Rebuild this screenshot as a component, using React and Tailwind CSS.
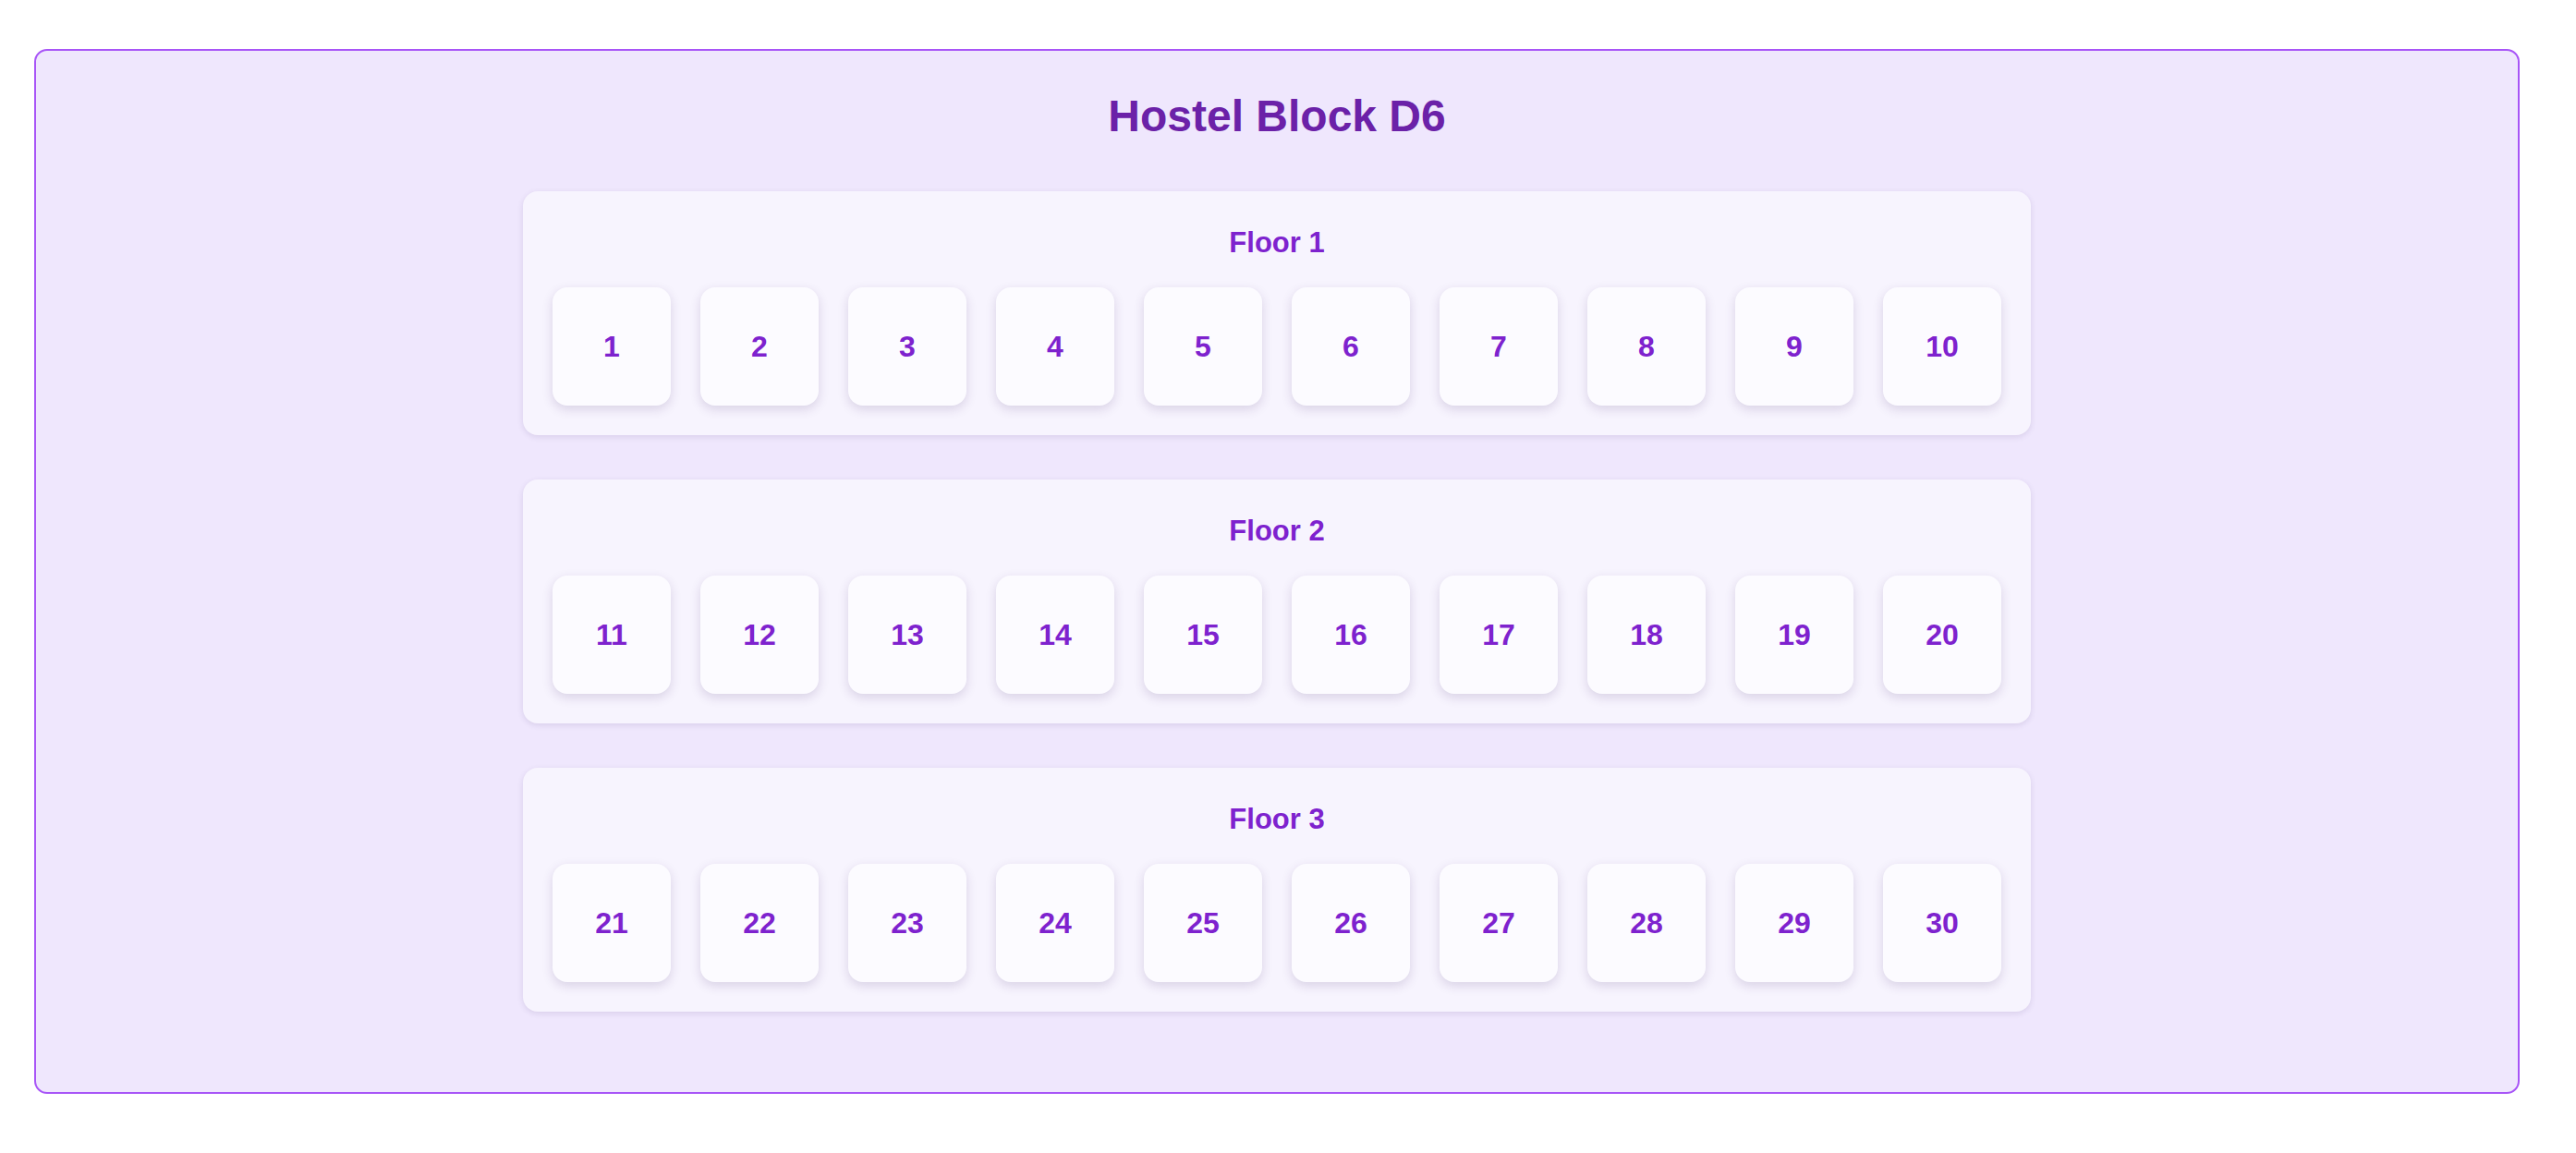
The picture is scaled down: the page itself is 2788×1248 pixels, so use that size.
import React from "react";

const floors = [
  { name: "Floor 1", rooms: [1, 2, 3, 4, 5, 6, 7, 8, 9, 10] },
  { name: "Floor 2", rooms: [11, 12, 13, 14, 15, 16, 17, 18, 19, 20] },
  { name: "Floor 3", rooms: [21, 22, 23, 24, 25, 26, 27, 28, 29, 30] },
];

function Room({ number }) {
  return (
    <div className="w-[128px] h-[128px] rounded-[16px] bg-[#fcfbff] shadow-[0_4px_12px_rgba(60,30,100,0.16)] flex items-center justify-center text-[32px] font-bold text-[#7e22ce]">
      {number}
    </div>
  );
}

function Floor({ floor }) {
  return (
    <div className="w-[1632px] mb-[48px] last:mb-0 rounded-[16px] bg-[#f7f4fe] shadow-[0_2px_6px_rgba(60,30,100,0.12)] px-[32px] pt-[38px] pb-[32px]">
      <div className="text-center text-[31px] leading-[36px] font-bold text-[#7e22ce] mb-[30px]">
        {floor.name}
      </div>
      <div className="flex gap-[32px]">
        {floor.rooms.map((r) => (
          <Room key={r} number={r} />
        ))}
      </div>
    </div>
  );
}

export default function App() {
  return (
    <div className="min-h-[1248px] bg-white pt-[53px] pl-[37px] font-['Liberation_Sans',Arial,sans-serif]">
      <div className="w-[2690px] rounded-[14px] border-2 border-[#a855f7] bg-[#efe7fd] pt-[43px] pb-[87px] flex flex-col items-center">
        <h1 className="text-[48px] leading-[56px] font-bold text-[#6b21a8] mb-[53px]">
          Hostel Block D6
        </h1>
        {floors.map((f) => (
          <Floor key={f.name} floor={f} />
        ))}
      </div>
    </div>
  );
}
